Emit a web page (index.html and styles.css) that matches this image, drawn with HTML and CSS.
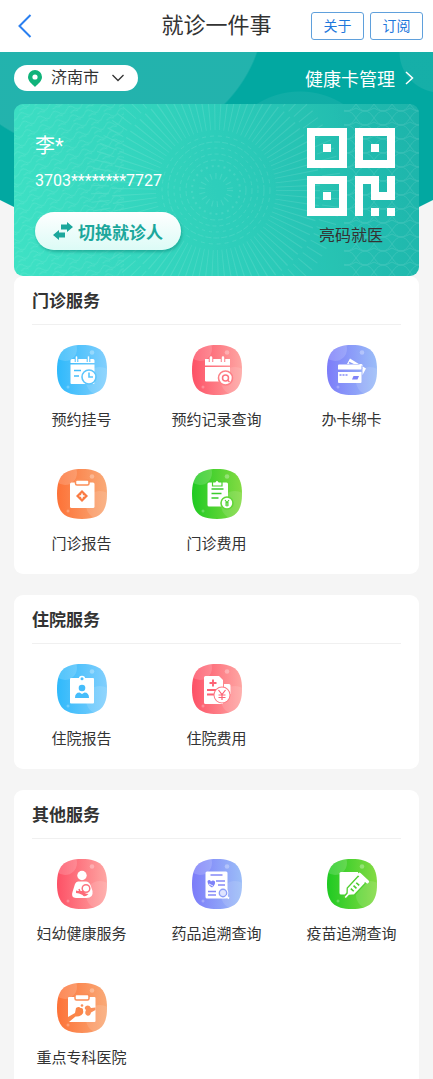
FILE: index.html
```html
<!DOCTYPE html>
<html lang="zh-CN">
<head>
  <meta charset="UTF-8">
  <meta name="viewport" content="width=device-width, initial-scale=1">
  <title>就诊一件事</title>
  <link rel="stylesheet" href="styles.css">
</head>
<body>

  <!-- shared icon tile and colours -->
  <svg class="defs" aria-hidden="true">
    <defs>
      <linearGradient id="blue"><stop offset="0" stop-color="#2fb9fb"/><stop offset="1" stop-color="#82cffd"/></linearGradient>
      <linearGradient id="red"><stop offset="0" stop-color="#fd5166"/><stop offset="1" stop-color="#fea6a3"/></linearGradient>
      <linearGradient id="purple"><stop offset="0" stop-color="#7c7cf9"/><stop offset="1" stop-color="#9bbdf8"/></linearGradient>
      <linearGradient id="orange"><stop offset="0" stop-color="#fd7237"/><stop offset="1" stop-color="#f9aa78"/></linearGradient>
      <linearGradient id="green"><stop offset="0" stop-color="#1fca22"/><stop offset="1" stop-color="#84db43"/></linearGradient>
      <clipPath id="tile-clip"><path d="M25 0C43 0 50 7 50 25S43 50 25 50 0 43 0 25 7 0 25 0Z"/></clipPath>
      <symbol id="tile" viewBox="0 0 50 50">
        <path d="M25 0C43 0 50 7 50 25S43 50 25 50 0 43 0 25 7 0 25 0Z"/>
        <g clip-path="url(#tile-clip)" fill="#fff">
          <circle cx="8" cy="4" r="12" opacity=".16"/>
          <circle cx="43" cy="36" r="14" opacity=".12"/>
          <circle cx="35" cy="7.500" r="2.300" opacity=".3"/>
          <circle cx="11" cy="42" r="1.500" opacity=".25"/>
        </g>
      </symbol>
    </defs>
  </svg>

  <header class="topbar">
    <button type="button" class="back" aria-label="返回">
      <svg width="14" height="24" viewBox="0 0 14 24"><path d="M12.500 1 1.500 12l11 11" fill="none" stroke="#2a7ff0" stroke-width="2"/></svg>
    </button>
    <h1>就诊一件事</h1>
    <div class="actions">
      <button type="button">关于</button>
      <button type="button">订阅</button>
    </div>
  </header>

  <main>
    <div class="hero">
      <div class="hero-bar">
        <label class="city">
          <svg width="14" height="17" viewBox="0 0 14 17"><path d="M7 0a7 7 0 0 1 7 7c0 4-4 7-7 10C4 14 0 11 0 7a7 7 0 0 1 7-7Z" fill="#0fb37a"/><circle cx="7" cy="7" r="2.600" fill="#fff"/></svg>
          <select aria-label="城市"><option>济南市</option></select>
          <svg class="city-arrow" width="12" height="8" viewBox="0 0 12 8"><path d="m.5 1 5.500 5.500L11.500 1" fill="none" stroke="#333" stroke-width="1.300"/></svg>
        </label>
        <a href="#" class="manage">健康卡管理
          <svg width="9" height="14" viewBox="0 0 9 14"><path d="m1 1 6.500 6L1 13" fill="none" stroke="#fff" stroke-width="1.500"/></svg>
        </a>
      </div>

      <section class="card">
        <svg class="card-pattern" viewBox="0 0 405 172" preserveAspectRatio="xMidYMid slice" aria-hidden="true">
          <defs>
            <pattern id="net" width="18" height="14" patternUnits="userSpaceOnUse">
              <path d="M0 0q4.500 7 9 7t9 7M0 14q4.500-7 9-7t9-7M0 4q9 6 18 0" />
            </pattern>
            <pattern id="wave" width="16" height="9" patternUnits="userSpaceOnUse" patternTransform="rotate(-18)">
              <path d="M0 4q4-5 8 0t8 0M3 8q4-3 8 0" />
            </pattern>
          </defs>
          <rect width="110" height="172" fill="url(#wave)"/>
          <rect x="330" width="75" height="172" fill="url(#net)"/>
          <g fill="none" stroke="#fff">
            <circle cx="202" cy="86" r="14" stroke-width="6" stroke-dasharray="1 4"/>
            <circle cx="202" cy="86" r="24" stroke-width="2" stroke-dasharray="2 4"/>
            <circle cx="202" cy="86" r="30" stroke-width="1" stroke-dasharray="5 3"/>
            <circle cx="202" cy="86" r="36" stroke-width="1" stroke-dasharray="4 3"/>
            <circle cx="202" cy="86" r="42" stroke-width="1" stroke-dasharray="3 4"/>
            <circle cx="202" cy="86" r="48" stroke-width="1" stroke-dasharray="6 2"/>
            <circle cx="202" cy="86" r="54" stroke-width="1" stroke-dasharray="4 4"/>
            <circle cx="202" cy="86" r="82" stroke-width="44" stroke-dasharray="1 5"/>
            <circle cx="202" cy="86" r="116" stroke-width="18" stroke-dasharray="1 7"/>
          </g>
        </svg>
        <div class="person">
          <p class="name">李*</p>
          <p class="id-number">3703********7727</p>
          <button type="button" class="switch">
            <svg width="20" height="18" viewBox="0 0 20 18" fill="#1ca79c"><path d="M8 2.500h6V0l6 5-6 5V7.500H8ZM12 10.500H6V8l-6 5 6 5v-2.500h6Z"/></svg>
            切换就诊人
          </button>
        </div>
        <div class="qr">
          <svg width="88" height="88" viewBox="0 0 11 11" fill="#fff" shape-rendering="crispEdges">
            <path fill-rule="evenodd" d="M0 0h5v5H0ZM1 1v3h3V1ZM6 0h5v5H6ZM7 1v3h3V1ZM0 6h5v5H0ZM1 7v3h3V7Z"/>
            <path d="M2 2h1v1H2ZM8 2h1v1H8ZM2 8h1v1H2ZM6 6h3v2h1V6h1v3H8V7H7v4H6ZM8 10h1v1H8ZM10 10h1v1h-1Z"/>
          </svg>
          <p>亮码就医</p>
        </div>
      </section>
    </div>

    <section class="panel">
      <h2>门诊服务</h2>
      <div class="grid">
        <a href="#" class="item">
          <svg viewBox="0 0 50 50" fill="#fff">
            <use href="#tile" fill="url(#blue)"/>
            <path d="M15 14h21q1.500 0 1.500 1.500V18h-24v-2.500Q13.500 14 15 14ZM13.500 19.500h24V38q0 1-1 1h-22q-1 0-1-1Z"/>
            <path d="M19.500 12v5M31.500 12v5" stroke="#4dbffc" stroke-width="3.600"/>
            <path d="M19.500 12v5M31.500 12v5" stroke="#fff" stroke-width="1.600" stroke-linecap="round"/>
            <path d="M17 25.500h7M17 31h5" stroke="#45bdfb" stroke-width="1.600"/>
            <circle cx="32" cy="32" r="7" stroke="#5cc5fc" stroke-width="1.600"/>
            <path d="M32 27.500V32h4" fill="none" stroke="#5cc5fc" stroke-width="1.600"/>
          </svg>
          <span>预约挂号</span>
        </a>
        <a href="#" class="item">
          <svg viewBox="0 0 50 50" fill="#fff">
            <use href="#tile" fill="url(#red)"/>
            <path d="M13 14h25v6.500H13ZM13 22h25v14.500H14q-1 0-1-1Z"/>
            <path d="M19 12v5M31 12v5" stroke="#fd7480" stroke-width="4.500"/>
            <path d="M19 12.500v4M31 12.500v4" stroke="#fff" stroke-width="2.600" stroke-linecap="round"/>
            <circle cx="33.500" cy="33" r="7" stroke="#fd8086" stroke-width="1.600"/>
            <circle cx="33.500" cy="33" r="3" fill="none" stroke="#fd7480" stroke-width="1.500"/>
            <path d="m35.500 35 2 2" stroke="#fd7480" stroke-width="1.500"/>
          </svg>
          <span>预约记录查询</span>
        </a>
        <a href="#" class="item">
          <svg viewBox="0 0 50 50" fill="#fff">
            <use href="#tile" fill="url(#purple)"/>
            <path d="m23 13.500 16 10-3.500 6.500V20q0-1-1.500-1H20Z"/>
            <path d="m22 17.500 13 6.500" stroke="#8c9ef8" stroke-width="1.600"/>
            <path d="M12 19.500h21q1.500 0 1.500 1.500v3.500H11V20.500q0-1 1-1ZM11 27h23.500v10q0 1-1 1H12q-1 0-1-1Z"/>
            <path d="M12.500 30h2M15.500 30h2M18.500 30h2" stroke="#868df8" stroke-width="1.500"/>
            <path d="m26.500 31h5.500l-1.500 3.500H25Z" fill="#7f83f8"/>
          </svg>
          <span>办卡绑卡</span>
        </a>
        <a href="#" class="item">
          <svg viewBox="0 0 50 50" fill="#fff">
            <use href="#tile" fill="url(#orange)"/>
            <rect x="13" y="13.500" width="24.500" height="25.500" rx="1.500"/>
            <rect x="18.500" y="11" width="13.500" height="5" rx="1.500" stroke="#fb8f58" stroke-width="1.500"/>
            <path d="m25 21 6 6-6 6-6-6Z" fill="#fa7b42"/>
            <path d="M25 24.500v5M22.500 27h5" stroke="#fff" stroke-width="1.600"/>
          </svg>
          <span>门诊报告</span>
        </a>
        <a href="#" class="item">
          <svg viewBox="0 0 50 50" fill="#fff">
            <use href="#tile" fill="url(#green)"/>
            <rect x="15.500" y="13.500" width="20.500" height="24" rx="1.500"/>
            <path d="M20.500 17v-4h2.500q2-3 4 0h3v4Z" stroke="#4bd02e" stroke-width="1.200"/>
            <path d="M19.500 20h12M19.500 24.500h10M19.500 29h7" stroke="#3acc2b" stroke-width="1.600"/>
            <circle cx="35" cy="34" r="6" stroke="#62d638" stroke-width="1.600"/>
            <path d="m33 31 2 2.500 2-2.500M35 33.500V37.500M33 34h4M33 36h4" fill="none" stroke="#4bd02e" stroke-width="1.100"/>
          </svg>
          <span>门诊费用</span>
        </a>
      </div>
    </section>

    <section class="panel">
      <h2>住院服务</h2>
      <div class="grid">
        <a href="#" class="item">
          <svg viewBox="0 0 50 50" fill="#fff">
            <use href="#tile" fill="url(#blue)"/>
            <rect x="13" y="14" width="24" height="25.500" rx="1"/>
            <circle cx="25" cy="15" r="3.200"/>
            <circle cx="25" cy="14.800" r="1.500" fill="#4dbffc"/>
            <circle cx="25" cy="24" r="3.300" fill="#45bdfb"/>
            <path d="M18 34q0-5.500 4.500-5.500l2.500 1.500 2.500-1.500q4.500 0 4.500 5.500Z" fill="#45bdfb"/>
          </svg>
          <span>住院报告</span>
        </a>
        <a href="#" class="item">
          <svg viewBox="0 0 50 50" fill="#fff">
            <use href="#tile" fill="url(#red)"/>
            <path d="M13.500 12H27l4 4v24H13.500q-1.500 0-1.500-1.500v-25q0-1.500 1.500-1.500ZM32 20h5q1.500 0 1.500 1.500V30H32Z"/>
            <path d="M21 15.500v7M17.500 19h7M15 26h9M15 30.500h7" stroke="#fd6375" stroke-width="1.900"/>
            <circle cx="30" cy="31" r="8.500" fill="#fd7a84"/>
            <circle cx="30" cy="31" r="7.500"/>
            <path d="m26.500 26 3.500 4.500 3.500-4.500M30 30.500V36M26.500 31h7M26.500 33.500h7" fill="none" stroke="#fd6375" stroke-width="1.200"/>
          </svg>
          <span>住院费用</span>
        </a>
      </div>
    </section>

    <section class="panel">
      <h2>其他服务</h2>
      <div class="grid">
        <a href="#" class="item">
          <svg viewBox="0 0 50 50" fill="#fff">
            <use href="#tile" fill="url(#red)"/>
            <circle cx="25" cy="16.500" r="4.700"/>
            <path d="M21 22.500h8q3 0 4.500 3.500l2 6q1 7-6 7H19q-5.500-.5-3.500-6l2.500-8q1-2.500 3-2.500Z"/>
            <circle cx="29" cy="29.500" r="3.800" stroke="#fd7480" stroke-width="1.500"/>
            <path d="M19 31.500q4 1 7.500 0 1 3.500 5 3.500-4 4-6 1-3.500-2-6.500-2Z" fill="#fd6b79"/>
            <path d="m22 30 1.500 4" stroke="#fd6b79" stroke-width="1.500"/>
          </svg>
          <span>妇幼健康服务</span>
        </a>
        <a href="#" class="item">
          <svg viewBox="0 0 50 50" fill="#fff">
            <use href="#tile" fill="url(#purple)"/>
            <rect x="13.500" y="12.500" width="22" height="27" rx="1.500"/>
            <path d="M18.500 16h12M24 22h9M26 26h7M16 32.500h8M16 36h8" stroke="#8589f8" stroke-width="1.400"/>
            <path d="M15.500 22q2-2 3.500.5 2-2 4 0 .5 3.500-3 6-4.500-2.500-4.500-6.500Z" fill="#7e82f8"/>
            <path d="m17 25 4 2" stroke="#fff" stroke-width=".9"/>
            <circle cx="31" cy="34" r="5.300"/>
            <circle cx="31" cy="34" r="3.700" fill="#dfe4fe" stroke="#8c9ef8" stroke-width="1.400"/>
            <path d="m34 37 3 2.500" stroke="#fff" stroke-width="1.800"/>
          </svg>
          <span>药品追溯查询</span>
        </a>
        <a href="#" class="item">
          <svg viewBox="0 0 50 50" fill="#fff">
            <use href="#tile" fill="url(#green)"/>
            <path d="M14 13h17v8L18 35.500h-4q-1.500 0-1.500-1.500V14.500Q12.500 13 14 13Z"/>
            <g transform="translate(28 28) rotate(43)">
              <path d="M-5-10h10V6L1.500 10v5h-3v-5L-5 6Z" stroke="#50cf30" stroke-width="1.300"/>
              <rect x="-7" y="-14" width="14" height="3.500" rx="1.500"/>
              <path d="M-4-11.500h8v3h-8Z"/>
              <path d="M-2-4h4M-2 0h4M-2 4h4" stroke="#4bcd2f" stroke-width="1.600"/>
            </g>
          </svg>
          <span>疫苗追溯查询</span>
        </a>
        <a href="#" class="item">
          <svg viewBox="0 0 50 50" fill="#fff">
            <use href="#tile" fill="url(#orange)"/>
            <rect x="11" y="14" width="27.500" height="25" rx="1"/>
            <rect x="18" y="11.500" width="14" height="5.500" rx="1.500" stroke="#fb8c55" stroke-width="1.500"/>
            <path d="m11 34 7-4 1-5q3-2 4.500 0 3-.5 2.500 2.500 1 2.500-1.500 4.500-3 2-6 1.500L12 39h-1Z" fill="#fb8548"/>
            <path d="M38.500 24.500 34 25q-2-3.500-5-2-2.500 2 0 4-2 4 1 5.500 3 1 4-3l4.500-2.500Z" fill="#fb8f58"/>
            <circle cx="25" cy="22.500" r="1.300" fill="#fb8f58"/>
          </svg>
          <span>重点专科医院</span>
        </a>
      </div>
    </section>
  </main>

</body>
</html>
```
FILE: styles.css
```css
* {
  box-sizing: border-box;
}
body {
  margin: 0;
  background-color: #f5f5f5;
  color: #333;
  font-family: Roboto, "Noto Sans CJK SC", sans-serif;
  font-size: 15px;
}
h1, h2, p {
  margin: 0;
}
a {
  color: inherit;
  text-decoration: none;
}
button, select {
  font-family: inherit;
  cursor: pointer;
}
svg {
  display: block;
  flex: none;
}
.defs {
  position: absolute;
  width: 0;
  height: 0;
}

/* top bar */
.topbar {
  display: grid;
  grid-template-columns: 1fr auto 1fr;
  align-items: center;
  height: 52px;
  padding: 0 10px;
  background-color: #fff;
}
.back {
  justify-self: start;
  padding: 8px;
  border: none;
  background: none;
}
.topbar h1 {
  font-size: 22px;
  font-weight: normal;
  line-height: 32px;
}
.actions {
  display: flex;
  justify-content: flex-end;
  gap: 6px;
}
.actions button {
  min-width: 53px;
  padding: 0 11px;
  border: 1px solid #5fa0dc;
  border-radius: 3px;
  background-color: #fff;
  color: #1f78dc;
  font-size: 14px;
  line-height: 26px;
}

/* hero */
.hero {
  position: relative;
  padding: 0 14px;
}
.hero::before {
  content: "";
  position: absolute;
  inset: 0;
  background:
    radial-gradient(circle at 440px 0, rgba(255,255,255,0.08) 0 40px, transparent 41px),
    radial-gradient(circle at 300px 120px, rgba(255,255,255,0.06) 0 80px, transparent 81px),
    radial-gradient(165px 145px at 100px -42px, rgba(255,255,255,0.13) 0 99%, transparent 100%),
    #02a8a1;
  clip-path: polygon(0 0, 100% 0, 100% 148px, calc(100% - 60px) 178px, 60px 178px, 0 148px);
}
.hero-bar {
  position: relative;
  display: flex;
  justify-content: space-between;
  align-items: center;
  height: 52px;
}
.city {
  display: flex;
  align-items: center;
  gap: 9px;
  height: 26px;
  padding: 0 14px;
  border-radius: 13px;
  background-color: #fff;
}
.city select {
  appearance: none;
  padding: 0;
  border: none;
  background: none;
  color: #333;
  font-size: 16px;
  line-height: 24px;
}
.city-arrow {
  margin-left: 3px;
}
.manage {
  display: flex;
  align-items: center;
  gap: 10px;
  padding-right: 5px;
  color: #fff;
  font-size: 18px;
}
.card {
  position: relative;
  display: flex;
  justify-content: space-between;
  padding: 24px 24px 26px 21px;
  border-radius: 9px;
  overflow: hidden;
  background: linear-gradient(75deg, #40e2c5, #2fcfbb 50%, #1db3aa);
}
.card-pattern {
  position: absolute;
  inset: 0;
  width: 100%;
  height: 100%;
  opacity: 0.1;
}
.card-pattern pattern path {
  fill: none;
  stroke: #fff;
}
.person, .qr {
  position: relative;
}
.person {
  padding-top: 6px;
  color: #fff;
}
.name {
  font-size: 20px;
  line-height: 24px;
}
.id-number {
  margin-top: 13px;
  font-size: 16px;
  line-height: 20px;
}
.switch {
  display: flex;
  align-items: center;
  gap: 5px;
  height: 38px;
  margin-top: 21px;
  padding: 0 18px;
  border: none;
  border-radius: 19px;
  background: linear-gradient(#fff, #dcfbf6);
  box-shadow: 1px 2px 3px rgba(0,110,100,0.4);
  color: #1ca79c;
  font-size: 17px;
  font-weight: bold;
}
.qr p {
  margin-top: 10px;
  font-size: 16px;
  line-height: 20px;
  text-align: center;
}

/* service panels */
.panel {
  margin: 0 14px 21px;
  border-radius: 9px;
  background-color: #fff;
}
.panel h2 {
  margin: 0 18px;
  padding-top: 2px;
  border-bottom: 1px solid #f0f0f0;
  font-size: 17px;
  line-height: 46px;
}
.grid {
  display: grid;
  grid-template-columns: repeat(3, 1fr);
  row-gap: 39px;
  padding: 20px 0;
}
.item {
  display: flex;
  flex-direction: column;
  align-items: center;
  gap: 15px;
  line-height: 20px;
}
.item svg {
  width: 50px;
  height: 50px;
}
```
